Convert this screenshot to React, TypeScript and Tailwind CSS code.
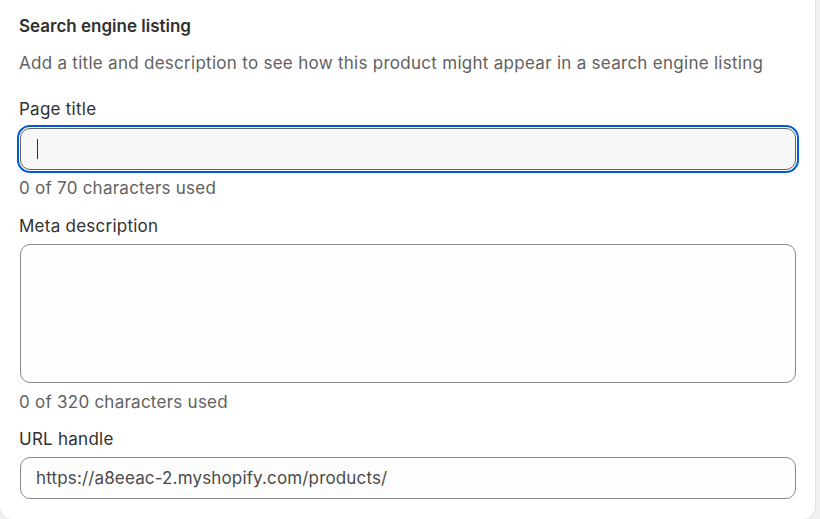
export default function App() {
  return (
    <div className="min-h-[519px] w-[820px] overflow-hidden bg-[#f1f1f1]" style={{ fontFamily: 'Inter, "Noto Sans", sans-serif' }}>
      <div className="-mt-3 h-[531px] w-[815px] rounded-xl bg-white px-[19px] pt-[28px] shadow-[0_1px_0_0_#e3e3e3,1px_0_0_0_#e3e3e3,-1px_0_0_0_#ebebeb]">
        <h2 className="text-[17px] font-semibold leading-5 text-[#303030]">Search engine listing</h2>
        <p className="mt-[17px] text-[17px] leading-5 tracking-[0.28px] text-[#616161]">
          Add a title and description to see how this product might appear in a search engine listing
        </p>

        <label className="mt-[26px] block text-[17px] leading-5 tracking-[0.25px] text-[#303030]">Page title</label>
        <div className="mt-[9px] ml-px">
          <div className="flex h-[42px] items-center rounded-[10px] border border-[#616161] bg-[#f7f7f7] px-4 outline-2 outline-offset-1 outline-[#005bd3] outline-solid">
            <span className="block h-5 w-px bg-[#303030]" />
          </div>
        </div>
        <p className="mt-[8px] text-[17px] leading-5 tracking-[0.25px] text-[#616161]">0 of 70 characters used</p>

        <label className="mt-[18px] block text-[17px] leading-5 tracking-[0.25px] text-[#303030]">Meta description</label>
        <div className="mt-[8px] ml-px h-[139px] rounded-[10px] border border-[#8a8a8a] bg-[#fdfdfd]" />
        <p className="mt-[9px] text-[17px] leading-5 tracking-[0.25px] text-[#616161]">0 of 320 characters used</p>

        <label className="mt-[17px] block text-[17px] leading-5 tracking-[0.25px] text-[#303030]">URL handle</label>
        <div className="mt-[8px] ml-px flex h-[42px] items-center rounded-[10px] border border-[#8a8a8a] bg-[#fdfdfd] px-[15px] pt-[2px] text-[17px] tracking-[0.15px] text-[#4a4a4a]">
          https://a8eeac-2.myshopify.com/products/
        </div>
      </div>
    </div>
  )
}
